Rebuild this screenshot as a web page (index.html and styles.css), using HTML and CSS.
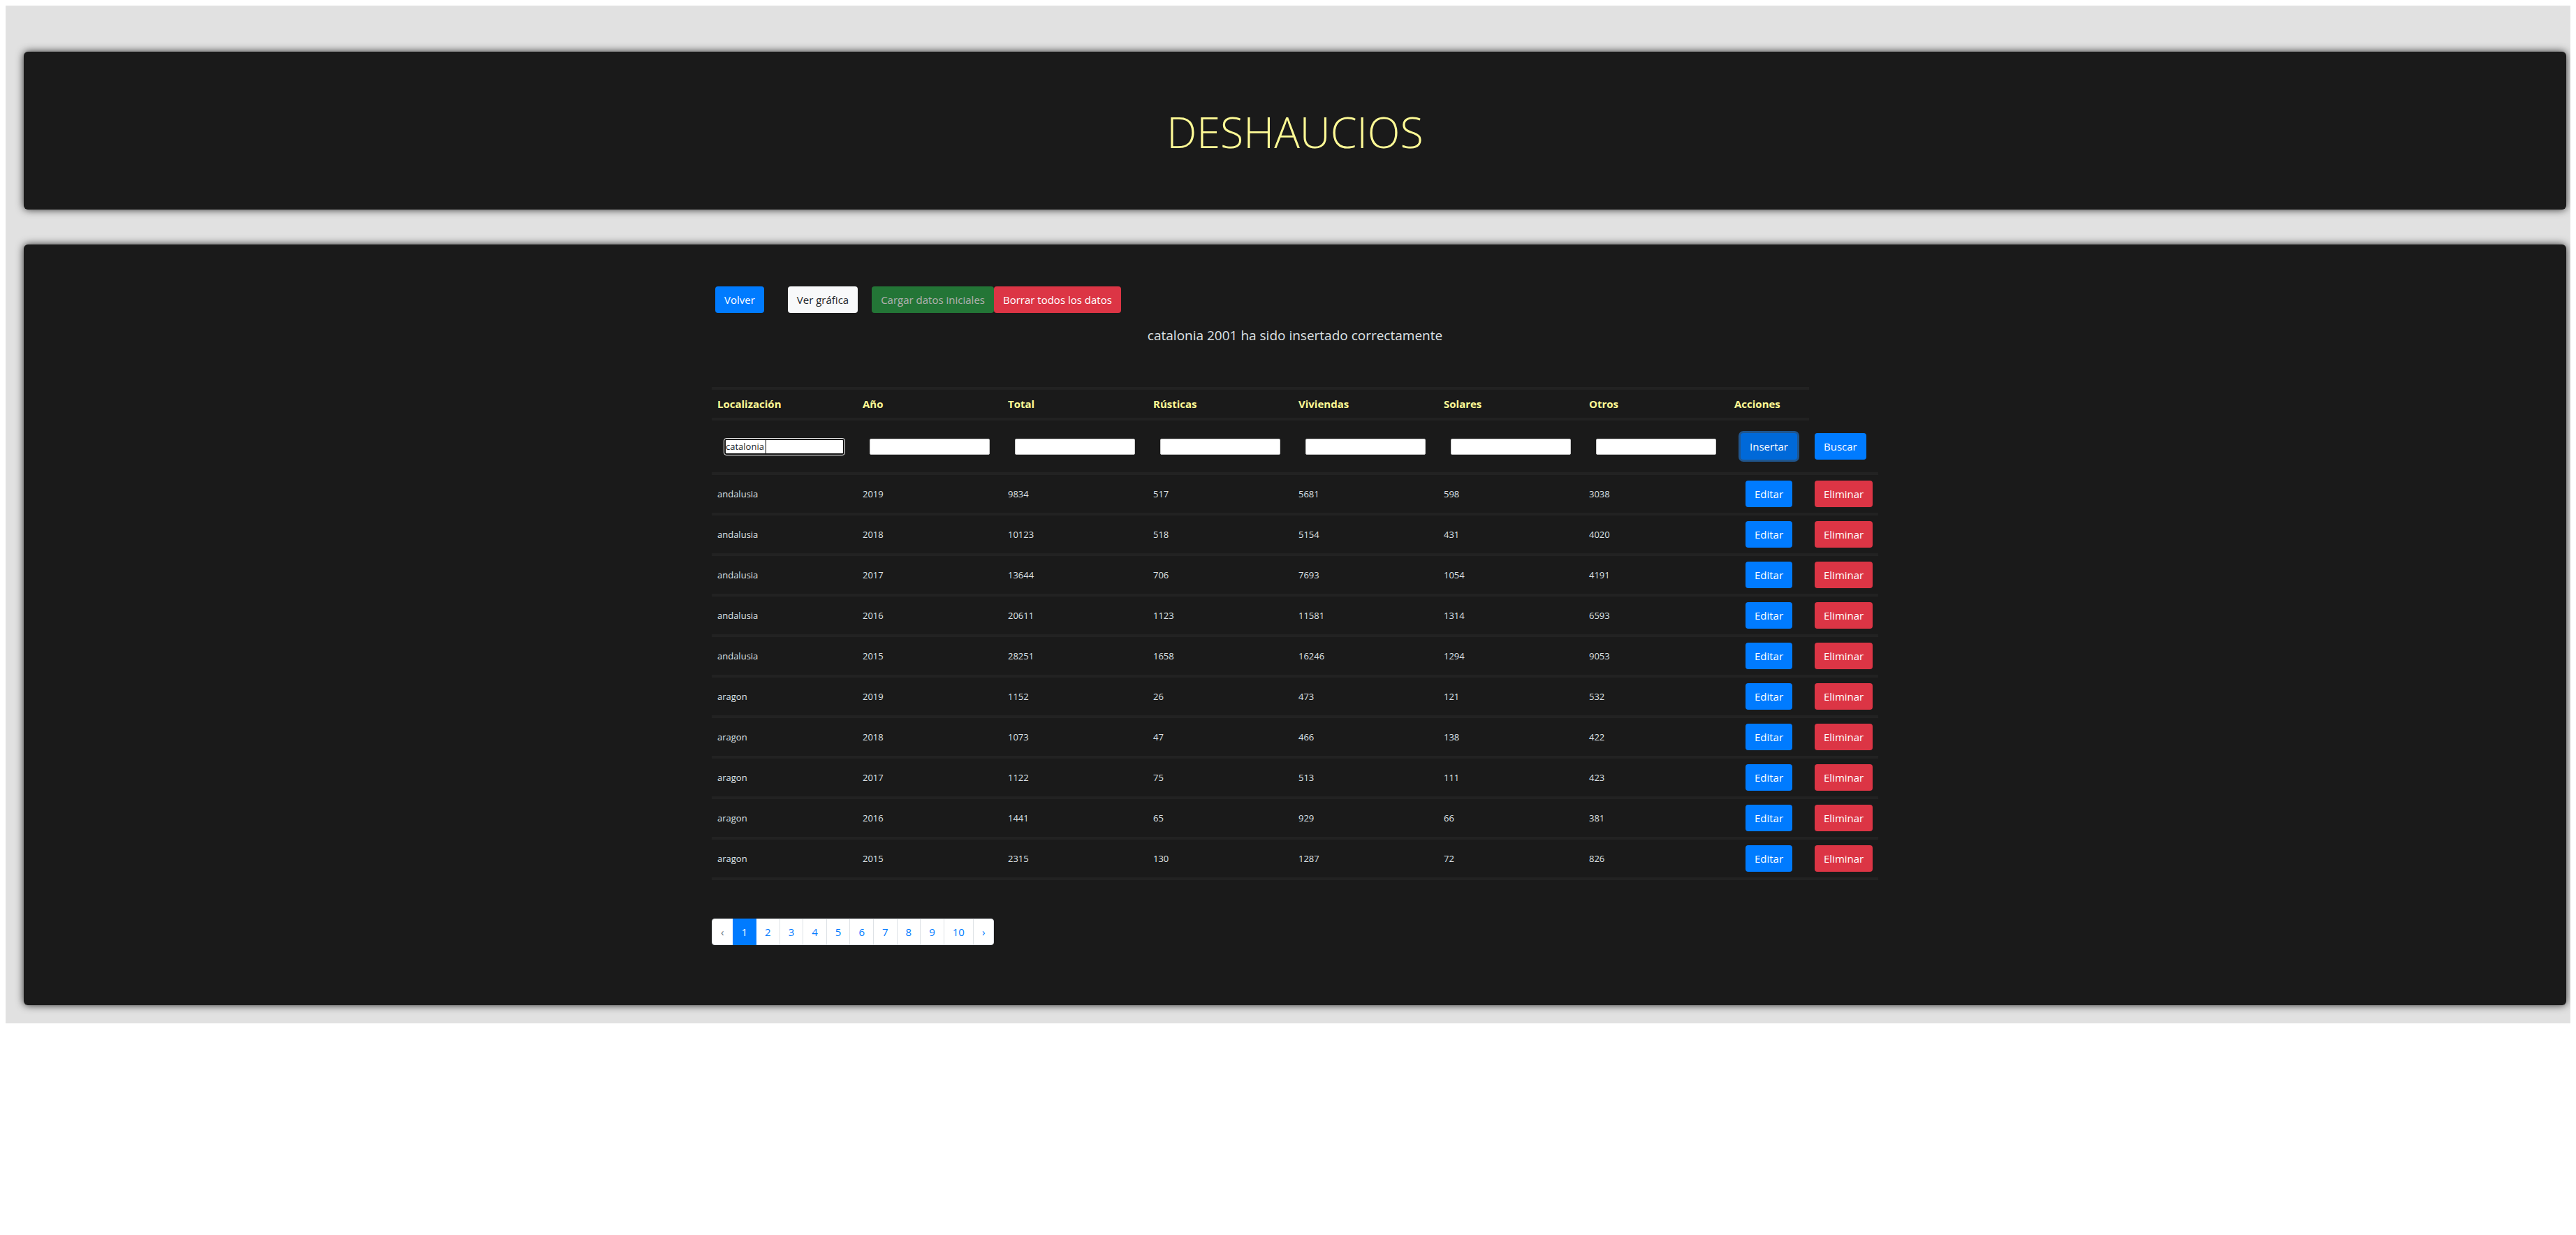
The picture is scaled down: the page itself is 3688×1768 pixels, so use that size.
FILE: index.html
```html
<!DOCTYPE html>
<html lang="es">
<head>
<meta charset="utf-8">
<meta name="viewport" content="width=device-width, initial-scale=1">
<title>Deshaucios</title>
<link rel="stylesheet" href="styles.css">
</head>
<body>
<main class="page">
  <header class="panel panel-title">
    <h1 class="title">DESHAUCIOS</h1>
  </header>
  <section class="panel panel-data">
    <div class="container">
      <div class="toolbar">
        <button type="button" class="btn btn-primary">Volver</button>
        <button type="button" class="btn btn-light">Ver gráfica</button>
        <div class="btn-pair">
          <button type="button" class="btn btn-success" disabled>Cargar datos iniciales</button>
          <button type="button" class="btn btn-danger">Borrar todos los datos</button>
        </div>
      </div>
      <p class="message" role="status">catalonia 2001 ha sido insertado correctamente</p>
      <table class="table">
        <colgroup>
          <col span="7" class="col-data">
          <col class="col-edit">
          <col class="col-delete">
        </colgroup>
        <thead>
          <tr><th>Localización</th><th>Año</th><th>Total</th><th>Rústicas</th><th>Viviendas</th><th>Solares</th><th>Otros</th><th>Acciones</th></tr>
        </thead>
        <tbody>
          <tr class="form-row">
            <td><div class="field"><input class="input input-active" type="text" aria-label="Localización" value="catalonia"><span class="caret"></span></div></td>
            <td><div class="field"><input class="input" type="text" aria-label="Año"></div></td>
            <td><div class="field"><input class="input" type="text" aria-label="Total"></div></td>
            <td><div class="field"><input class="input" type="text" aria-label="Rústicas"></div></td>
            <td><div class="field"><input class="input" type="text" aria-label="Viviendas"></div></td>
            <td><div class="field"><input class="input" type="text" aria-label="Solares"></div></td>
            <td><div class="field"><input class="input" type="text" aria-label="Otros"></div></td>
            <td class="action"><button type="button" class="btn btn-primary btn-active">Insertar</button></td>
            <td><button type="button" class="btn btn-primary">Buscar</button></td>
          </tr>
          <tr><td>andalusia</td><td>2019</td><td>9834</td><td>517</td><td>5681</td><td>598</td><td>3038</td><td class="action"><button type="button" class="btn btn-primary">Editar</button></td><td><button type="button" class="btn btn-danger">Eliminar</button></td></tr>
          <tr><td>andalusia</td><td>2018</td><td>10123</td><td>518</td><td>5154</td><td>431</td><td>4020</td><td class="action"><button type="button" class="btn btn-primary">Editar</button></td><td><button type="button" class="btn btn-danger">Eliminar</button></td></tr>
          <tr><td>andalusia</td><td>2017</td><td>13644</td><td>706</td><td>7693</td><td>1054</td><td>4191</td><td class="action"><button type="button" class="btn btn-primary">Editar</button></td><td><button type="button" class="btn btn-danger">Eliminar</button></td></tr>
          <tr><td>andalusia</td><td>2016</td><td>20611</td><td>1123</td><td>11581</td><td>1314</td><td>6593</td><td class="action"><button type="button" class="btn btn-primary">Editar</button></td><td><button type="button" class="btn btn-danger">Eliminar</button></td></tr>
          <tr><td>andalusia</td><td>2015</td><td>28251</td><td>1658</td><td>16246</td><td>1294</td><td>9053</td><td class="action"><button type="button" class="btn btn-primary">Editar</button></td><td><button type="button" class="btn btn-danger">Eliminar</button></td></tr>
          <tr><td>aragon</td><td>2019</td><td>1152</td><td>26</td><td>473</td><td>121</td><td>532</td><td class="action"><button type="button" class="btn btn-primary">Editar</button></td><td><button type="button" class="btn btn-danger">Eliminar</button></td></tr>
          <tr><td>aragon</td><td>2018</td><td>1073</td><td>47</td><td>466</td><td>138</td><td>422</td><td class="action"><button type="button" class="btn btn-primary">Editar</button></td><td><button type="button" class="btn btn-danger">Eliminar</button></td></tr>
          <tr><td>aragon</td><td>2017</td><td>1122</td><td>75</td><td>513</td><td>111</td><td>423</td><td class="action"><button type="button" class="btn btn-primary">Editar</button></td><td><button type="button" class="btn btn-danger">Eliminar</button></td></tr>
          <tr><td>aragon</td><td>2016</td><td>1441</td><td>65</td><td>929</td><td>66</td><td>381</td><td class="action"><button type="button" class="btn btn-primary">Editar</button></td><td><button type="button" class="btn btn-danger">Eliminar</button></td></tr>
          <tr><td>aragon</td><td>2015</td><td>2315</td><td>130</td><td>1287</td><td>72</td><td>826</td><td class="action"><button type="button" class="btn btn-primary">Editar</button></td><td><button type="button" class="btn btn-danger">Eliminar</button></td></tr>
        </tbody>
      </table>
      <nav aria-label="Paginación">
        <ul class="pagination">
          <li><span class="page-link disabled">‹</span></li>
          <li><a class="page-link current" href="#1" aria-current="page">1</a></li>
          <li><a class="page-link" href="#2">2</a></li>
          <li><a class="page-link" href="#3">3</a></li>
          <li><a class="page-link" href="#4">4</a></li>
          <li><a class="page-link" href="#5">5</a></li>
          <li><a class="page-link" href="#6">6</a></li>
          <li><a class="page-link" href="#7">7</a></li>
          <li><a class="page-link" href="#8">8</a></li>
          <li><a class="page-link" href="#9">9</a></li>
          <li><a class="page-link" href="#10">10</a></li>
          <li><a class="page-link" href="#2">›</a></li>
        </ul>
      </nav>
    </div>
  </section>
</main>
</body>
</html>
```
FILE: styles.css
```css
* {
  box-sizing: border-box;
}

body {
  margin: 8px;
  background: #fff;
  color: #dee2e6;
  font: 15px/24px "Open Sans", "Noto Sans", sans-serif;
}

.page {
  display: flex;
  flex-direction: column;
  gap: 50px;
  padding: 66px 6px 26px 26px;
  background: #e1e1e1;
}

.panel {
  border-radius: 6px;
  background: #1a1a1a;
  box-shadow: 0 0 12px rgba(0, 0, 0, 0.8);
}

.panel-title {
  padding: 76px 20px 72px;
}

.title {
  margin: 0;
  color: #fffb96;
  font-size: 61px;
  font-weight: 300;
  line-height: 78px;
  text-align: center;
}

.panel-data {
  padding: 60px 20px 86px;
}

.container {
  max-width: 1670px;
  margin: 0 auto;
}

.toolbar {
  display: flex;
  padding-left: 5px;
}

.toolbar .btn-light {
  margin: 0 20px 0 34px;
}

.btn-pair {
  display: flex;
}

.btn {
  height: 38px;
  padding: 0 12px;
  border: 1px solid transparent;
  border-radius: 4px;
  color: #fff;
  font: inherit;
  white-space: nowrap;
}

.btn-primary {
  background: #007bff;
}

.btn-light {
  background: #f8f9fa;
  color: #212529;
}

.btn-success {
  background: #28a745;
  opacity: 0.65;
}

.btn-danger {
  background: #dc3545;
}

.btn-active {
  background: #0069d9;
  box-shadow: 0 0 0 3px rgba(38, 143, 255, 0.5);
}

.message {
  margin: 17px 0 59px;
  font-size: 19px;
  line-height: 30px;
  text-align: center;
}

.table {
  width: 100%;
  table-layout: fixed;
  border-collapse: separate;
  border-spacing: 0;
  font-size: 13px;
}

.col-edit {
  width: 115px;
}

.col-delete {
  width: 99px;
}

.table th {
  padding: 8px;
  border: solid #222;
  border-width: 4px 0;
  color: #fffb96;
  font-size: 15px;
  font-weight: 700;
  text-align: left;
}

.table td {
  height: 58px;
  padding: 0 8px;
  border-bottom: 4px solid #222;
  vertical-align: middle;
}

.table .btn {
  font-size: 15px;
}

.table .form-row td {
  height: 78px;
}

.table .action {
  padding: 0;
  text-align: center;
}

.field {
  position: relative;
  padding: 0 10px;
}

.input {
  display: block;
  width: 100%;
  height: 23px;
  padding: 0 1px;
  border: 1px solid #ccc;
  border-radius: 2px;
  background: #fff;
  color: #212529;
  font: 13px/20px "Open Sans", "Noto Sans", sans-serif;
}

.input-active {
  padding: 0;
  border: 2px solid #101010;
  border-radius: 3px;
  outline: 1px solid #fff;
}

/* text cursor at the end of the typed value */
.caret {
  position: absolute;
  top: 2px;
  left: 69px;
  width: 1px;
  height: 19px;
  background: #000;
}

.pagination {
  display: flex;
  width: max-content;
  margin: 55px 0 0 1px;
  padding: 0;
  list-style: none;
}

.page-link {
  display: block;
  margin-left: -1px;
  padding: 6px 12px;
  border: 1px solid #dee2e6;
  background: #fff;
  color: #007bff;
  text-decoration: none;
}

.pagination li:first-child .page-link {
  border-radius: 4px 0 0 4px;
}

.pagination li:last-child .page-link {
  border-radius: 0 4px 4px 0;
}

.page-link.disabled {
  color: #6c757d;
}

.page-link.current {
  position: relative;
  border-color: #007bff;
  background: #007bff;
  color: #fff;
}
```
